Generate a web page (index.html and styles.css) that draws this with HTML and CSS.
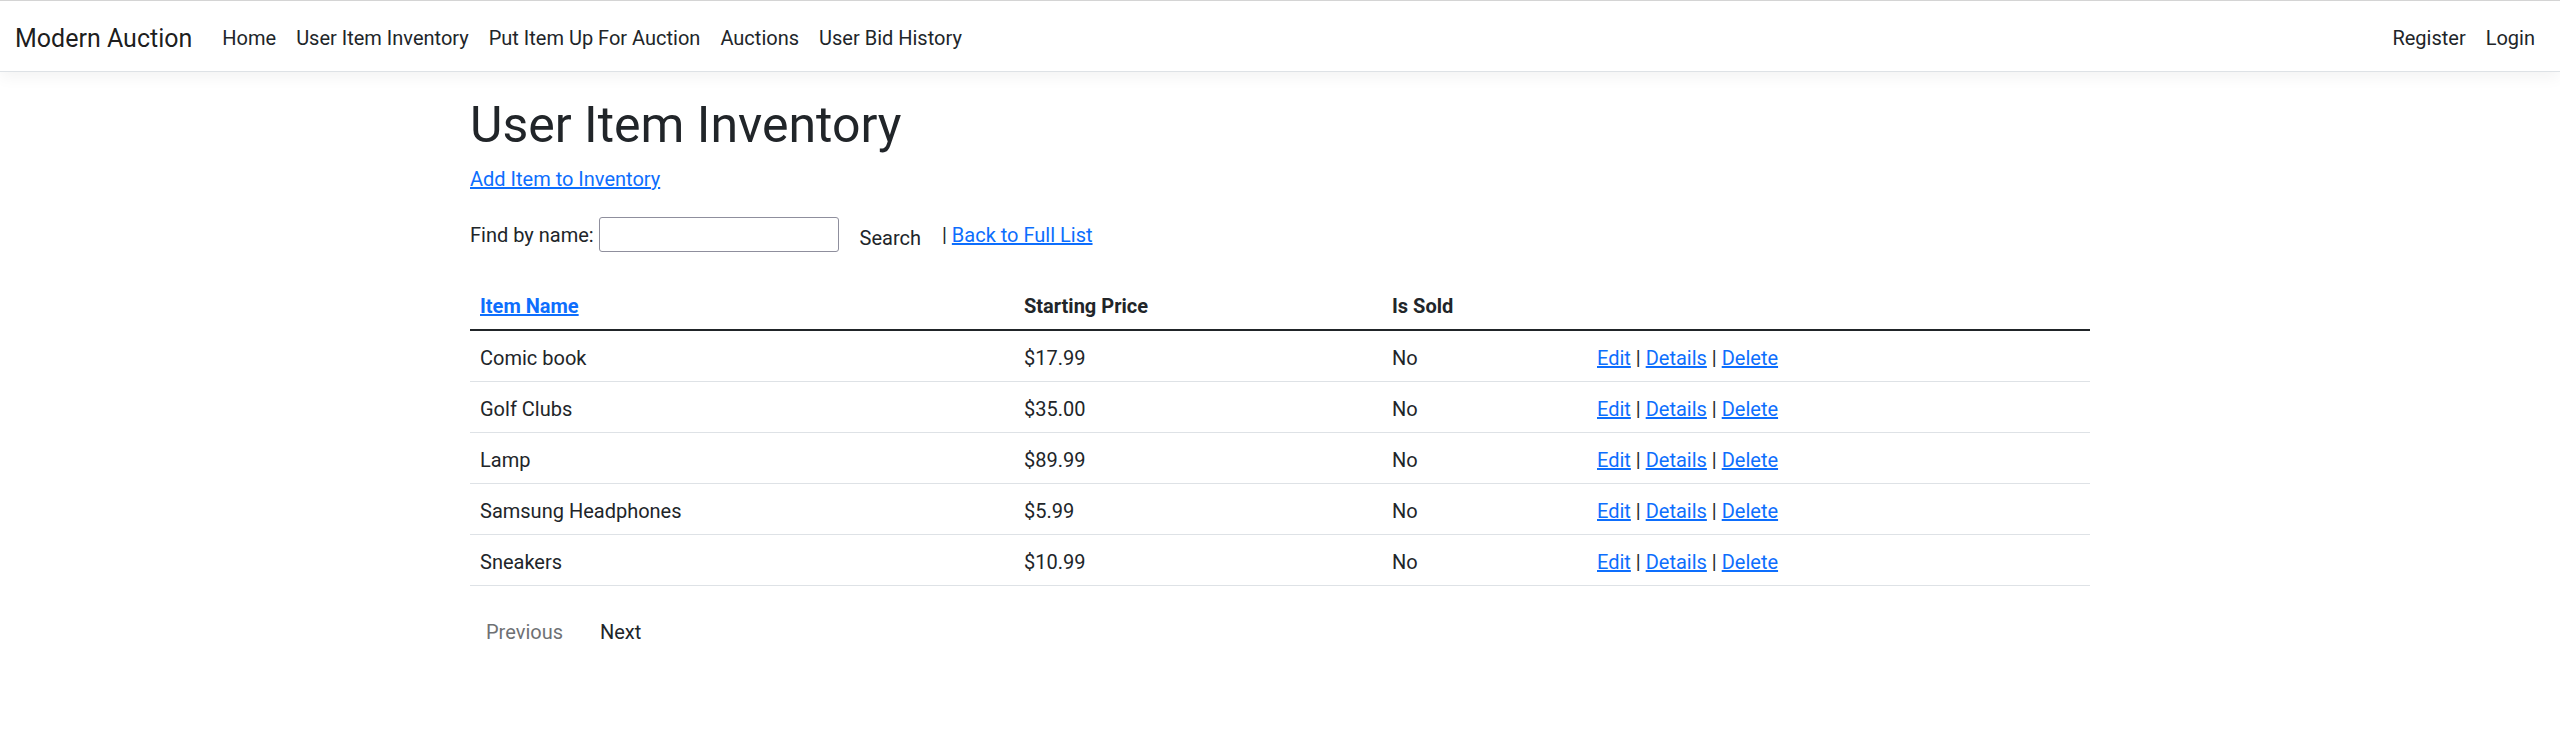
FILE: index.html
```html
<!DOCTYPE html>
<html lang="en">
<head>
<meta charset="utf-8">
<title>User Item Inventory - Modern Auction</title>
<link rel="stylesheet" href="styles.css">
</head>
<body>
<header>
  <nav class="navbar">
    <div class="nav-container">
      <a class="brand" href="#">Modern Auction</a>
      <ul class="nav-list nav-main">
        <li><a class="nav-link" href="#">Home</a></li>
        <li><a class="nav-link" href="#">User Item Inventory</a></li>
        <li><a class="nav-link" href="#">Put Item Up For Auction</a></li>
        <li><a class="nav-link" href="#">Auctions</a></li>
        <li><a class="nav-link" href="#">User Bid History</a></li>
      </ul>
      <ul class="nav-list">
        <li><a class="nav-link" href="#">Register</a></li>
        <li><a class="nav-link" href="#">Login</a></li>
      </ul>
    </div>
  </nav>
</header>
<div class="container">
  <main class="main">
    <h1 class="title">User Item Inventory</h1>
    <p class="para"><a href="#">Add Item to Inventory</a></p>
    <form class="search-form" method="get">
      <p class="para search-row">Find by name: <input class="search-input" type="text" name="SearchString" value=""> <button type="submit" class="btn">Search</button> | <a href="#">Back to Full List</a></p>
    </form>
    <table class="table">
      <thead>
        <tr>
          <th class="col-name"><a href="#">Item Name</a></th>
          <th class="col-price">Starting Price</th>
          <th class="col-sold">Is Sold</th>
          <th class="col-actions"></th>
        </tr>
      </thead>
      <tbody>
        <tr><td>Comic book</td><td>$17.99</td><td>No</td><td><a href="#">Edit</a> | <a href="#">Details</a> | <a href="#">Delete</a></td></tr>
        <tr><td>Golf Clubs</td><td>$35.00</td><td>No</td><td><a href="#">Edit</a> | <a href="#">Details</a> | <a href="#">Delete</a></td></tr>
        <tr><td>Lamp</td><td>$89.99</td><td>No</td><td><a href="#">Edit</a> | <a href="#">Details</a> | <a href="#">Delete</a></td></tr>
        <tr><td>Samsung Headphones</td><td>$5.99</td><td>No</td><td><a href="#">Edit</a> | <a href="#">Details</a> | <a href="#">Delete</a></td></tr>
        <tr><td>Sneakers</td><td>$10.99</td><td>No</td><td><a href="#">Edit</a> | <a href="#">Details</a> | <a href="#">Delete</a></td></tr>
      </tbody>
    </table>
    <div class="pager">
      <a href="#" class="btn pager-btn disabled">Previous</a> <a href="#" class="btn pager-btn">Next</a>
    </div>
  </main>
</div>
</body>
</html>
```

FILE: styles.css
```css
*, *::before, *::after { box-sizing: border-box; }

html { font-size: 20px; }

body {
  margin: 0;
  font-family: "Segoe UI", Roboto, "Liberation Sans", sans-serif;
  font-size: 1rem;
  font-weight: 400;
  line-height: 1.5;
  color: #212529;
  background: #fff;
}

a { color: #0d6efd; text-decoration: underline; }

.navbar {
  display: flex;
  align-items: center;
  padding: 0.5rem 0;
  background: #fff;
  border-top: 1px solid #d4d4d4;
  border-bottom: 1px solid #dee2e6;
  box-shadow: 0 0.25rem 0.75rem rgba(0, 0, 0, 0.05);
  margin-bottom: 1rem;
}

.nav-container {
  width: 100%;
  display: flex;
  align-items: center;
  padding: 0 15px;
}

.brand {
  font-size: 1.25rem;
  line-height: 1.5;
  padding: 8.5px 0 4px;
  margin-right: 1rem;
  color: rgba(0, 0, 0, 0.9);
  text-decoration: none;
  white-space: nowrap;
}

.nav-list {
  display: flex;
  list-style: none;
  margin: 0;
  padding: 0;
}

.nav-main { flex-grow: 1; }

.nav-link {
  display: block;
  padding: 12px 10px 8px;
  color: #212529;
  text-decoration: none;
}

.container {
  max-width: 1650px;
  margin: 0 auto;
  padding: 0 15px;
}

.main { padding-bottom: 1rem; }

.title {
  margin: 0 0 0.5rem;
  padding-top: 7px;
  font-size: 2.5rem;
  font-weight: 400;
  line-height: 53px;
}

.para {
  margin: 0 0 18px;
  padding-top: 2px;
}

.search-row {
  margin-bottom: 19px;
  padding-top: 1px;
}

.search-form { margin: 0; }

.search-input {
  font: inherit;
  color: #212529;
  width: 240px;
  height: 35px;
  padding: 1px 3px;
  border: 1px solid #8f8f9d;
  border-radius: 3px;
  background: #fff;
  margin: 0;
}

.btn {
  display: inline-block;
  padding: 8.5px 15px 6.5px;
  font: inherit;
  line-height: 1.5;
  color: #212529;
  background: transparent;
  border: 1px solid transparent;
  border-radius: 0.25rem;
  vertical-align: middle;
  text-decoration: none;
  margin: 0;
  cursor: pointer;
}

.pager-btn { padding: 9.5px 15px 5.5px; }

.btn.disabled { opacity: 0.65; pointer-events: none; }

.table {
  width: 100%;
  border-collapse: collapse;
  margin-bottom: 1rem;
  color: #212529;
}

.table th,
.table td {
  padding: 12px 10px 8px;
  text-align: left;
  vertical-align: top;
  border-bottom: 1px solid #dee2e6;
}

.table thead th {
  font-weight: 700;
  border-bottom: 2px solid #212529;
}

.col-name { width: 544px; }
.col-price { width: 368px; }
.col-sold { width: 205px; }
.col-actions { width: 503px; }

.pager { margin: 0; }
```
